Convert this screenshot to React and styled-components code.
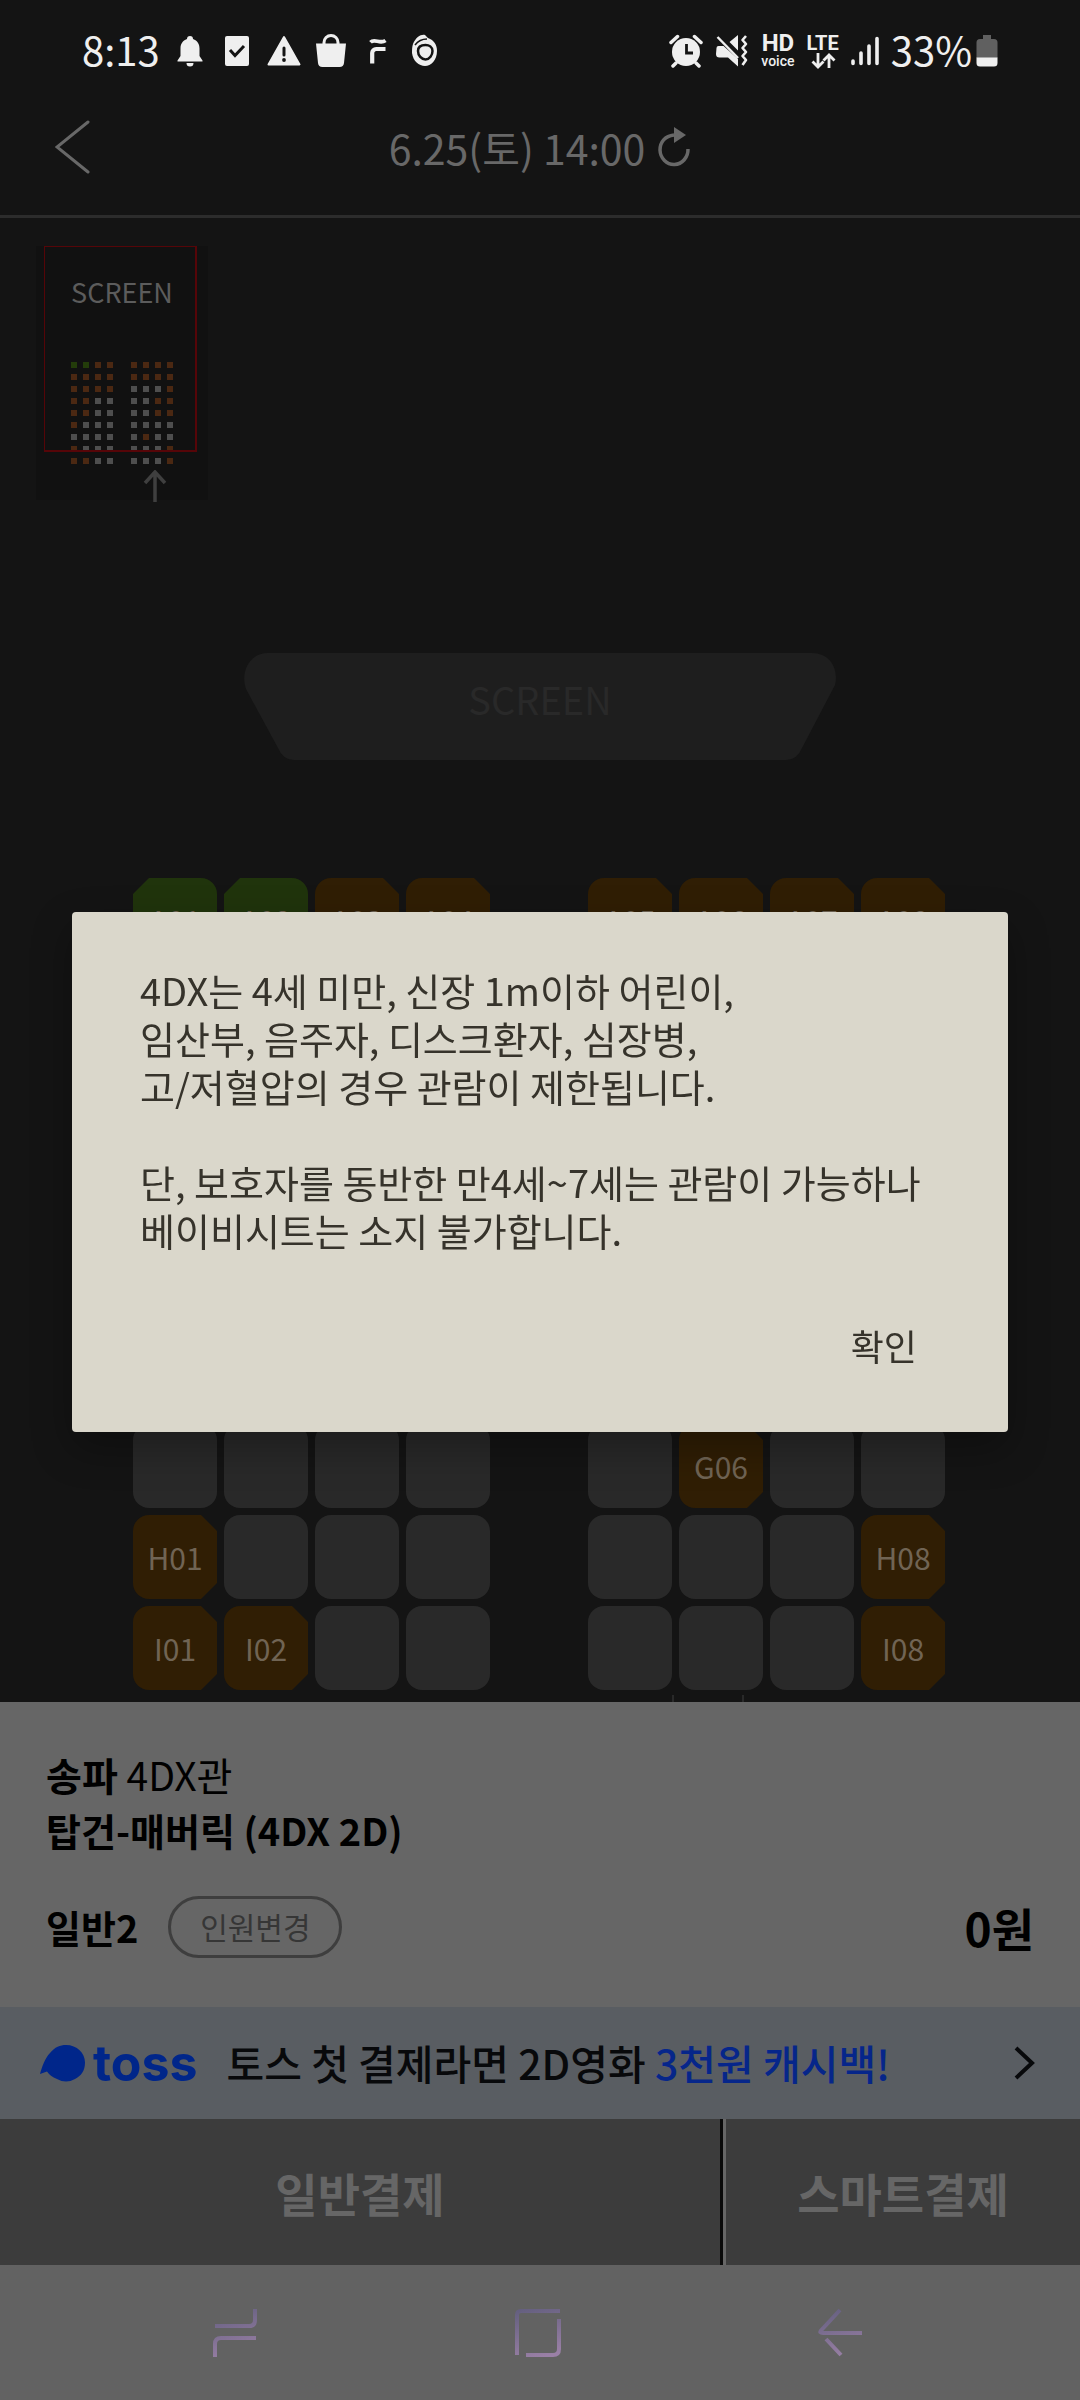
import React from "react";
import styled, { createGlobalStyle, css } from "styled-components";

const ROWS = [
  ["A", "ggoo", "oooo"],
  ["B", "oooo", "oooo"],
  ["C", "oooo", "---o"],
  ["D", "oo--", "--oo"],
  ["E", "oo--", "--oo"],
  ["F", "o---", "----"],
  ["G", "----", "-o--"],
  ["H", "o---", "---o"],
  ["I", "oo--", "---o"],
];

// rows that lie fully under the open dialog keep only their aria-label
const COVERED_ROWS = "BCDEF";

function SeatBlock({ side }) {
  const offset = side === 1 ? 1 : 5;
  return (
    <SeatGrid>
      {ROWS.map((row) =>
        row[side].split("").map((type, i) => {
          const name = `${row[0]}0${i + offset}`;
          const showName = type !== "-" && !COVERED_ROWS.includes(row[0]);
          return (
            <Seat key={name} $type={type} disabled={type === "-"} aria-label={name}>
              {showName && name}
            </Seat>
          );
        })
      )}
    </SeatGrid>
  );
}

function MiniBlock({ side }) {
  return (
    <DotGrid>
      {ROWS.map((row) =>
        row[side]
          .split("")
          .map((type, i) => <Dot key={`${row[0]}${i}`} $type={type} />)
      )}
    </DotGrid>
  );
}

function StatusBar() {
  return (
    <StatusContainer>
      <StatusLeft>
        <StatusText>8:13</StatusText>
        <svg width="26" height="32" viewBox="0 0 26 32" fill="#efefef">
          <path d="M13 1a3 3 0 0 1 3 3c4.500 1.500 6.500 5 6.500 9.500V21l3 4.500v1H.5v-1L3.500 21v-7.500C3.500 9 5.500 5.500 10 4a3 3 0 0 1 3-3zM9.500 28h7a3.500 3.500 0 0 1-7 0z" />
        </svg>
        <svg width="26" height="32" viewBox="0 0 26 32">
          <rect x="1" y="1" width="24" height="30" rx="2" fill="#efefef" />
          <path d="M6 15l5 5.500 9-9.500" fill="none" stroke="#141414" strokeWidth="3" />
        </svg>
        <svg width="34" height="32" viewBox="0 0 34 32">
          <path d="M17 2L32.500 29.500h-31z" fill="#efefef" stroke="#efefef" strokeWidth="2" strokeLinejoin="round" />
          <path d="M17 13v7" stroke="#141414" strokeWidth="3" strokeLinecap="round" />
          <circle cx="17" cy="25" r="1.900" fill="#141414" />
        </svg>
        <svg width="32" height="34" viewBox="0 0 32 34">
          <path d="M1 9.500h30l-2 19.500a4.500 4.500 0 0 1-4.500 4h-17A4.500 4.500 0 0 1 3 29z" fill="#efefef" />
          <path d="M9 11V8.500a7 7 0 0 1 14 0V11" fill="none" stroke="#efefef" strokeWidth="3" />
        </svg>
        <svg width="18" height="26" viewBox="0 0 18 26" fill="none" stroke="#efefef" strokeWidth="3.800">
          <path d="M1.500 4.200C5.500 0 11 6.500 16.500 2.500" />
          <path d="M3.200 25.500V15a4 4 0 0 1 4-4H16.500" strokeWidth="4.200" />
        </svg>
        <svg width="28" height="34" viewBox="0 0 28 34">
          <path d="M2 10C5 3 10 0 14 1l3 3c6 2 9 7 9 13 0 9-6 15-12 15S2 27 1 19c0-3 0-6 1-9z" fill="#efefef" />
          <path d="M4 11C7 7 11 5 16 5" fill="none" stroke="#141414" strokeWidth="1.500" />
          <path d="M7 17c0-5 4-6 7.500-6s7 2 7 6-3 8.500-7 8.500S7 21.500 7 17z" fill="none" stroke="#141414" strokeWidth="2.500" />
        </svg>
      </StatusLeft>
      <StatusRight>
        <svg width="34" height="34" viewBox="0 0 34 34">
          <circle cx="17" cy="18" r="14" fill="#efefef" />
          <path d="M2 8.500L8.500 2.500M32 8.500L25.500 2.500M7 29l-3 3M27 29l3 3" stroke="#efefef" strokeWidth="3.500" strokeLinecap="round" />
          <path d="M17.500 10v9h6.500" fill="none" stroke="#141414" strokeWidth="2.800" />
        </svg>
        <svg width="34" height="34" viewBox="0 0 34 34">
          <path d="M14.500 8L23 1v15.500zM1.500 14q0-2 2-2h5L23 25v7.500l-10-9H4.500A3.500 3.500 0 0 1 1 20z" fill="#efefef" />
          <path d="M2.500 3L23 24" stroke="#efefef" strokeWidth="2.500" />
          <path d="M31 2l-3.500 4 3.500 4-3.500 4 3.500 4-3.500 4 3.500 4-3.500 5" fill="none" stroke="#efefef" strokeWidth="2.600" strokeLinejoin="round" />
        </svg>
        <Carrier>
          <CarrierTop $size={24}>HD</CarrierTop>
          <CarrierBottom>voice</CarrierBottom>
        </Carrier>
        <Carrier>
          <CarrierTop $size={20}>LTE</CarrierTop>
          <svg width="26" height="16" viewBox="0 0 26 16" fill="none" stroke="#efefef" strokeWidth="2.800">
            <path d="M8 0v14M2.500 8.500L8 14l5.500-5.500M19 15V2M13.500 7.500L19 2l5.500 5.500" />
          </svg>
        </Carrier>
        <svg width="28" height="30" viewBox="0 0 28 30" stroke="#efefef" strokeWidth="3.600" strokeLinecap="round">
          <path d="M2 25v2.500M10 17v10.500M18 10v17.500M26 2.500v25" />
        </svg>
        <Battery>
          <StatusText>33%</StatusText>
          <svg width="22" height="32" viewBox="0 0 22 32">
            <path d="M7 0h8v4h3a3.500 3.500 0 0 1 3.500 3.500V23H.5V7.500A3.500 3.500 0 0 1 4 4h3z" fill="#606060" />
            <path d="M.5 22.500h21V28a3.500 3.500 0 0 1-3.500 3.500H4A3.500 3.500 0 0 1 .5 28z" fill="#efefef" />
          </svg>
        </Battery>
      </StatusRight>
    </StatusContainer>
  );
}

export default function App() {
  return (
    <>
      <GlobalStyle />
      <Page>
        <StatusBar />
        <Header>
          <IconButton aria-label="뒤로">
            <svg width="36" height="56" viewBox="0 0 36 56" fill="none" stroke="#686868" strokeWidth="3" strokeLinecap="round">
              <path d="M33 3L2 28l31 25" />
            </svg>
          </IconButton>
          <TitleGroup>
            <Title>6.25(토) 14:00</Title>
            <IconButton aria-label="새로고침">
              <svg width="34" height="42" viewBox="0 0 34 42">
                <path d="M17 9C8 10 3 16 3 24a14 15 0 0 0 28-1" fill="none" stroke="#686868" strokeWidth="3.500" />
                <path d="M17 1l12 8-12 8z" fill="#686868" />
              </svg>
            </IconButton>
          </TitleGroup>
        </Header>

        <SeatMap>
          <MiniMap>
            <MiniTitle>SCREEN</MiniTitle>
            <MiniSeats>
              <MiniBlock side={1} />
              <MiniBlock side={2} />
            </MiniSeats>
            <MiniArrow width="24" height="32" viewBox="0 0 24 32" fill="none" stroke="#3f3f3f" strokeWidth="3.500">
              <path d="M12 32V3M2 13L12 2l10 11" />
            </MiniArrow>
            <ViewFrame />
          </MiniMap>

          <Screen viewBox="0 0 592 107">
            <path d="M24 0h544c18 0 27 16 23 32L558 95q-5 12-16 12H50q-11 0-16-12L2 36C-4 18 6 0 24 0z" fill="#1e1e1e" />
            <text x="296" y="62" textAnchor="middle" fontSize="38" fill="#292929">
              SCREEN
            </text>
          </Screen>
          <Seats>
            <SeatBlock side={1} />
            <SeatBlock side={2} />
          </Seats>
          <ExitRow>
            <Exit />
          </ExitRow>
        </SeatMap>

        <Summary>
          <Theater>
            <strong>송파</strong> 4DX관
          </Theater>
          <Movie>탑건-매버릭 (4DX 2D)</Movie>
          <PeopleRow>
            <People>일반2</People>
            <ChangeButton>인원변경</ChangeButton>
            <Price>0원</Price>
          </PeopleRow>
        </Summary>

        <Banner href="#toss">
          <svg width="46" height="40" viewBox="0 0 46 40">
            <path d="M0 31C2 24 5 15 10 10 15 4 20 2 26 2c11 0 19 8 19 17.500C45 28 41 33 35 36q-9 5-18 0Q10 33 7 28.500z" fill="#00268a" />
          </svg>
          <Toss>toss</Toss>
          <BannerText>
            토스 첫 결제라면 2D영화 <em>3천원 캐시백!</em>
          </BannerText>
          <svg width="22" height="34" viewBox="0 0 22 34" fill="none" stroke="#08090b" strokeWidth="4">
            <path d="M3 2l16 15L3 32" />
          </svg>
        </Banner>

        <PayRow>
          <PayButton $wide>일반결제</PayButton>
          <PayDivider />
          <PayButton>스마트결제</PayButton>
        </PayRow>

        <NavBar>
          <IconButton aria-label="최근 앱">
            <svg width="46" height="50" viewBox="0 0 46 50" fill="none" stroke="url(#nav)" strokeWidth="4">
              <defs>
                <linearGradient id="nav" gradientUnits="userSpaceOnUse" x1="10" y1="0" x2="25" y2="50">
                  <stop offset="0" stopColor="#645f7f" />
                  <stop offset="1" stopColor="#9a80a6" />
                </linearGradient>
              </defs>
              <path d="M43 1v11q0 6-6 6H3M3 49V36q0-6 6-6h35" />
            </svg>
          </IconButton>
          <IconButton aria-label="홈">
            <svg width="46" height="50" viewBox="0 0 46 50" fill="none" stroke="url(#nav)" strokeWidth="4">
              <path d="M2 47V7q0-4 4-4h39M44 11v30q0 6-6 6H11" />
            </svg>
          </IconButton>
          <IconButton aria-label="이전">
            <svg width="46" height="50" viewBox="0 0 46 50" fill="none" stroke="url(#nav)" strokeWidth="4">
              <path d="M22 2L3 22.500q-2 2.500 2 2.500h39M8 31l15 16" />
            </svg>
          </IconButton>
        </NavBar>
      </Page>

      <Overlay>
        <Dialog role="dialog" aria-modal="true">
          <Message>
            4DX는 4세 미만, 신장 1m이하 어린이,
            <br />
            임산부, 음주자, 디스크환자, 심장병,
            <br />
            고/저혈압의 경우 관람이 제한됩니다.
          </Message>
          <Message>
            단, 보호자를 동반한 만4세~7세는 관람이 가능하나
            <br />
            베이비시트는 소지 불가합니다.
          </Message>
          <Confirm>확인</Confirm>
        </Dialog>
      </Overlay>
    </>
  );
}

const GlobalStyle = createGlobalStyle`
  * {
    box-sizing: border-box;
  }
  body {
    margin: 0;
    background-color: #141414;
    font-family: "Noto Sans CJK KR", "Noto Sans", sans-serif;
  }
  button {
    padding: 0;
    border: none;
    background: none;
    font-family: inherit;
  }
  svg {
    flex-shrink: 0;
  }
`;

const Page = styled.div`
  display: flex;
  flex-direction: column;
  min-height: 100vh;
`;

const StatusContainer = styled.div`
  display: flex;
  justify-content: space-between;
  align-items: center;
  height: 82px;
  padding: 20px 82px 0 82px;
  color: #efefef;
`;

const StatusLeft = styled.div`
  display: flex;
  align-items: center;
  gap: 13px;
  > svg {
    width: 34px;
  }
`;

const StatusRight = styled.div`
  display: flex;
  align-items: center;
  gap: 12px;
`;

const Battery = styled.div`
  display: flex;
  align-items: center;
  gap: 4px;
`;

const StatusText = styled.span`
  padding-bottom: 4px;
  font-size: 40px;
  line-height: 44px;
`;

const Carrier = styled.div`
  display: flex;
  flex-direction: column;
  align-items: center;
  font-family: Roboto, sans-serif;
`;

const CarrierTop = styled.span`
  font-size: ${({ $size }) => $size}px;
  font-weight: 700;
  line-height: 20px;
`;

const CarrierBottom = styled.span`
  font-size: 14px;
  font-weight: 500;
  line-height: 16px;
`;

const IconButton = styled.button`
  display: flex;
`;

const Header = styled.header`
  display: grid;
  grid-template-columns: 1fr auto 1fr;
  align-items: center;
  height: 136px;
  padding: 0 55px 4px;
  border-bottom: 3px solid #2c2c2c;
`;

const TitleGroup = styled.div`
  display: flex;
  align-items: center;
  gap: 12px;
`;

const Title = styled.h1`
  margin: 0;
  color: #686868;
  font-size: 41px;
  font-weight: 400;
  line-height: 48px;
`;

const SeatMap = styled.main`
  position: relative;
  flex: 1;
  display: flex;
  flex-direction: column;
  align-items: center;
  padding-top: 435px;
  overflow: hidden;
`;

const MiniMap = styled.div`
  position: absolute;
  top: 28px;
  left: 36px;
  display: flex;
  flex-direction: column;
  align-items: center;
  width: 172px;
  height: 254px;
  padding-top: 26px;
  background-color: #111;
`;

const MiniTitle = styled.span`
  color: #5c5c5c;
  font-size: 27px;
  line-height: 40px;
`;

const MiniSeats = styled.div`
  display: flex;
  gap: 18px;
  margin-top: 50px;
`;

const DotGrid = styled.div`
  display: grid;
  grid-template-columns: repeat(4, 6px);
  grid-auto-rows: 6px;
  gap: 6px;
`;

const dotColors = { g: "#233c0a", o: "#4b2812", "-": "#4e4e4e" };

const Dot = styled.i`
  background-color: ${({ $type }) => dotColors[$type]};
`;

const MiniArrow = styled.svg`
  margin: 6px 0 0 66px;
`;

const ViewFrame = styled.div`
  position: absolute;
  top: 0;
  left: 8px;
  width: 153px;
  height: 206px;
  border: solid #560508;
  border-width: 1px 2px 2px 1px;
`;

const Screen = styled.svg`
  width: 592px;
  height: 107px;
`;

const Seats = styled.div`
  display: flex;
  gap: 98px;
  margin-top: 118px;
  padding-right: 2px;
`;

const SeatGrid = styled.div`
  display: grid;
  grid-template-columns: repeat(4, 84px);
  grid-auto-rows: 84px;
  gap: 7px;
`;

const Seat = styled.button`
  border-radius: 16px;
  color: #706454;
  background-color: #292929;
  font-size: 30px;
  line-height: 40px;
  ${({ $type }) =>
    $type === "o" &&
    css`
      background-color: #301e04;
      clip-path: polygon(0 0, 68px 0, 100% 16px, 100% 68px, 68px 100%, 0 100%);
    `}
  ${({ $type }) =>
    $type === "g" &&
    css`
      background-color: #20340c;
      clip-path: polygon(16px 0, 100% 0, 100% 100%, 16px 100%, 0 68px, 0 16px);
    `}
`;

const ExitRow = styled.div`
  width: 812px;
  padding: 5px 0 0 538px;
`;

const Exit = styled.div`
  width: 72px;
  height: 7px;
  border: solid #292929;
  border-width: 0 2px;
`;

const Summary = styled.section`
  padding: 44px 46px 49px;
  color: #000;
  background-color: #666;
`;

const Theater = styled.p`
  margin: 0;
  font-size: 39px;
  font-weight: 400;
  line-height: 56px;
  > strong {
    font-weight: 700;
  }
`;

const Movie = styled.p`
  margin: 0;
  font-size: 38px;
  font-weight: 700;
  line-height: 56px;
`;

const PeopleRow = styled.div`
  display: flex;
  align-items: center;
  margin-top: 38px;
`;

const People = styled.span`
  font-size: 38px;
  font-weight: 700;
  line-height: 56px;
`;

const ChangeButton = styled.button`
  width: 174px;
  height: 62px;
  margin-left: 30px;
  padding-bottom: 2px;
  border: 3px solid #3e3e3e;
  border-radius: 31px;
  color: #363636;
  font-size: 30px;
  line-height: 40px;
`;

const Price = styled.strong`
  margin-left: auto;
  font-size: 46px;
  font-weight: 700;
  line-height: 56px;
`;

const Banner = styled.a`
  display: flex;
  align-items: center;
  height: 112px;
  padding: 0 45px 0 40px;
  color: #08090b;
  background-color: #595d62;
  text-decoration: none;
`;

const Toss = styled.span`
  margin-left: 7px;
  color: #00268a;
  font-family: Inter, sans-serif;
  font-size: 50px;
  font-weight: 700;
  line-height: 56px;
`;

const BannerText = styled.span`
  flex: 1;
  margin-left: 29px;
  padding-bottom: 2px;
  font-size: 41px;
  font-weight: 500;
  line-height: 56px;
  white-space: nowrap;
  > em {
    color: #06268a;
    font-style: normal;
  }
`;

const PayRow = styled.div`
  display: flex;
  height: 146px;
  background-color: #3c3c3c;
`;

const PayButton = styled.button`
  flex: ${({ $wide }) => ($wide ? "0 0 calc(100% * 2 / 3)" : "1")};
  color: #666;
  font-size: 46px;
  font-weight: 700;
  line-height: 56px;
`;

const PayDivider = styled.div`
  width: 6px;
  border: solid #0a0a0a;
  border-width: 0 0 0 3px;
  background-color: #666;
`;

const NavBar = styled.nav`
  display: flex;
  justify-content: space-between;
  align-items: center;
  height: 135px;
  padding: 0 216px 0 212px;
  background-color: #626262;
`;

/* insets keep the dialog centred between the status bar and the nav bar */
const Overlay = styled.div`
  position: fixed;
  inset: 80px 0 136px;
  display: flex;
  align-items: center;
  padding: 0 72px;
`;

const Dialog = styled.section`
  display: flex;
  flex: 1;
  flex-direction: column;
  gap: 48px;
  padding: 54px 68px 61px;
  border-radius: 4px;
  color: #36332b;
  background-color: #dad7cb;
  box-shadow: 0 16px 40px rgba(0, 0, 0, 0.3);
`;

const Message = styled.p`
  margin: 0;
  font-size: 38px;
  line-height: 48px;
`;

const Confirm = styled.button`
  align-self: flex-end;
  margin-top: 17px;
  padding: 0 23px;
  color: #36332b;
  font-size: 36px;
  line-height: 52px;
`;
